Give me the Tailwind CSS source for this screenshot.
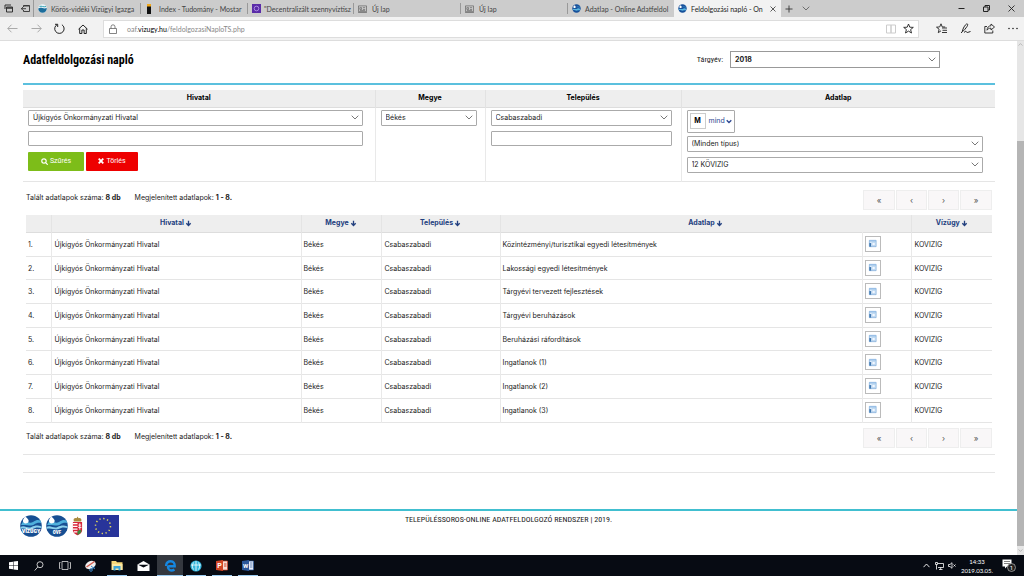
<!DOCTYPE html>
<html lang="hu">
<head>
<meta charset="utf-8">
<title>Feldolgozási napló - Online Adatfeldolgozó</title>
<script src="https://cdn.jsdelivr.net/npm/@tailwindcss/browser@4"></script>
</head>
<body class="flex min-h-screen flex-col bg-white font-['Inter','Roboto',sans-serif] text-[7px] leading-[10px] text-[#222]">
<svg class="hidden">
  <symbol id="chev" viewBox="0 0 8 5"><path d="M.7.7 4 4 7.3.7" fill="none" stroke="currentColor" stroke-width=".8"/></symbol>
  <symbol id="drop" viewBox="0 0 12 12"><circle cx="6" cy="6" r="5.6" fill="#17509a"/><path d="M1 7c2-2 3 .5 5-.5s3-1 5 0c-.4 1.300-1 1.800-1.500 2.200-2-.8-3 .6-4.500 0S2 8 1.200 8z" fill="#5ab6e0"/><path d="M3.500 1.500C5 3 5.500 4.500 4.200 5.200 2.800 5.800 1.800 4.800 1.600 3.700z" fill="#fff"/><path d="M6 4c2-1 3 .5 5 .3" stroke="#4aa3d8" stroke-width=".8" fill="none"/></symbol>
  <symbol id="news" viewBox="0 0 10 9"><path d="M.5 1h9v6.500h-9zM0 8.500h10M2 3h2v2H2zM5.500 3H8M5.500 5H8M2 6.300h6" fill="none" stroke="#555" stroke-width=".7"/></symbol>
  <symbol id="arrow" viewBox="0 0 8 8"><path d="M4 .8v5.500M1.500 3.800 4 6.300 6.500 3.800" fill="none" stroke="currentColor" stroke-width="1.500"/></symbol>
  <symbol id="sheet" viewBox="0 0 10 10"><path d="M1.500 1.500h7.500v7H1.500z" fill="#dcebf9" stroke="#7aa9d8" stroke-width=".8"/><path d="M1.500 2.200H9" stroke="#93bde8" stroke-width="1.300"/><path d="M1.500 4.500h2v4h-2z" fill="#3f77b0"/><path d="M4.500 3.800h3.500v3.500H4.500z" fill="#f2f8ff" stroke="#9fc3e8" stroke-width=".6"/></symbol>
  <symbol id="waves" viewBox="0 0 22 22"><circle cx="11" cy="11" r="10.800" fill="#174f93"/><path d="M3 6.500c4-1.500 6 3 10 .5s5-2 7.500-1.500l.8 2.500c-3-.5-5 0-7.500 1.700S7 9.500 1 10z" fill="#4fb0dc"/><path d="M.5 12c4-2.500 7 2 11 0s6-2 10-.5v1.500c-4-1-6-.5-9 1s-8-1.500-12 0z" fill="#8bd0ec"/><path d="M5 1.500c3 2 5 4.500 2.500 6.500C4.500 9.500 2.300 7 3 5z" fill="#fff"/></symbol>
</svg>

<!-- Browser tabs -->
<header>
  <div class="flex h-[17px] items-stretch bg-[#ccc] font-['Lato','Open_Sans',sans-serif] text-[7px] text-[#444]">
    <div class="flex w-[34px] shrink-0 items-center gap-2 border-r border-[#999] pl-1">
      <button aria-label="Félretett lapok"><svg class="h-[9px] w-[9px]" viewBox="0 0 9 9" fill="none" stroke="#333"><path d="M1 5V1h6M2.500 3h6v5h-6z"/><path d="M2.500 4h6" stroke-width="1.500"/></svg></button>
      <button aria-label="Lapok félretétele"><svg class="h-[9px] w-[9px]" viewBox="0 0 9 9" fill="none" stroke="#333" stroke-width=".9"><path d="M2.500 3V1.500h6v6h-6V6M2.500 2h6M0 4.700h5M2 3 .5 4.700 2 6.300"/></svg></button>
    </div>
    <nav class="flex min-w-0 flex-1" aria-label="Lapok">
      <a href="#" class="my-[3px] flex w-[107px] items-center gap-1 border-r border-[#999] pl-1"><svg class="h-[9px] w-[9px] shrink-0" viewBox="0 0 9 9"><circle cx="4.500" cy="4.500" r="4.300" fill="#e8f5fa"/><path d="M.2 4.500c3-2 5 1 8.600-.5C8.800 7 7 8.800 4.500 8.800S.4 7 .2 4.500z" fill="#1c6d9c"/><path d="M1.500 2.500c2-1 4 1 6.500 0" stroke="#39a3b5" fill="none"/></svg><span class="whitespace-nowrap">Körös-vidéki Vízügyi Igazga</span></a>
      <a href="#" class="my-[3px] flex w-[107px] items-center gap-[6px] border-r border-[#999] pl-1"><svg class="h-[10px] w-[8px] shrink-0" viewBox="0 0 8 10"><path d="M2 0h4v10H2z" fill="#111"/><path d="M2 0h4v2.500H2z" fill="#f1a81c"/></svg><span class="whitespace-nowrap">Index - Tudomány - Mostar</span></a>
      <a href="#" class="my-[3px] flex w-[106px] items-center gap-[3px] border-r border-[#999] pl-1"><svg class="h-[9px] w-[9px] shrink-0" viewBox="0 0 9 9"><path d="M0 0h9v9H0z" fill="#5a2ca8"/><circle cx="4.500" cy="4.500" r="2.300" fill="none" stroke="#bda0ee" stroke-width=".8"/></svg><span class="whitespace-nowrap">"Decentralizált szennyvíztisz</span></a>
      <a href="#" class="my-[3px] flex w-[107px] items-center gap-[5px] border-r border-[#999] pl-1"><svg class="h-[8px] w-[9px] shrink-0"><use href="#news"/></svg>Új lap</a>
      <a href="#" class="my-[3px] flex w-[107px] items-center gap-[5px] border-r border-[#999] pl-1"><svg class="h-[8px] w-[9px] shrink-0"><use href="#news"/></svg>Új lap</a>
      <a href="#" class="my-[3px] flex w-[106px] items-center gap-1 pl-1"><svg class="h-[9px] w-[9px] shrink-0"><use href="#drop"/></svg><span class="whitespace-nowrap">Adatlap - Online Adatfeldol</span></a>
      <a href="#" class="flex w-[107px] items-center gap-1 bg-[#f2f2f2] pr-[5px] pl-1 text-[#222]"><svg class="h-[9px] w-[9px] shrink-0"><use href="#drop"/></svg><span class="flex-1 whitespace-nowrap">Feldolgozási napló - On</span><svg class="h-[6px] w-[6px] shrink-0" viewBox="0 0 6 6" stroke="#333" stroke-width=".8"><path d="m.5.500 5 5M5.500.500l-5 5"/></svg></a>
      <div class="flex items-center gap-[9px] pl-1 text-[#555]">
        <button aria-label="Új lap nyitása"><svg class="h-2 w-2" viewBox="0 0 8 8" stroke="#333" stroke-width=".9"><path d="M4 .5v7M.5 4h7"/></svg></button>
        <button aria-label="Lapok előnézete"><svg class="h-[5px] w-2"><use href="#chev"/></svg></button>
      </div>
    </nav>
    <div class="flex items-center gap-[18px] pr-[9px]">
      <button aria-label="Kis méret"><svg class="h-[7px] w-[7px]" viewBox="0 0 7 7" stroke="#222"><path d="M.5 3.500h6"/></svg></button>
      <button aria-label="Előző méret"><svg class="h-[7px] w-[7px]" viewBox="0 0 7 7" fill="none" stroke="#222"><path d="M2 2V.5h4.500V5H5M.5 2h4.500v4.500H.5z"/></svg></button>
      <button aria-label="Bezárás"><svg class="h-[7px] w-[7px]" viewBox="0 0 7 7" stroke="#222" stroke-width=".9"><path d="m.5.500 6 6M6.500.500l-6 6"/></svg></button>
    </div>
  </div>
  <div class="flex h-6 items-center border-b border-[#ddd] bg-[#f2f2f2]">
    <div class="flex w-[103px] items-center justify-between pr-[15px] pl-[7px]">
      <button aria-label="Vissza"><svg class="h-[9px] w-[11px]" viewBox="0 0 11 9" fill="none" stroke="#aaa"><path d="M10.500 4.500H.8M4.500.700.800 4.500l3.700 3.800"/></svg></button>
      <button aria-label="Előre"><svg class="h-[9px] w-[11px]" viewBox="0 0 11 9" fill="none" stroke="#aaa"><path d="M.5 4.500h9.700M6.500.700l3.700 3.800-3.700 3.800"/></svg></button>
      <button aria-label="Frissítés"><svg class="h-[11px] w-[11px]" viewBox="0 0 11 11" fill="none" stroke="#222"><path d="M3.300 1.500a4.700 4.700 0 1 0 4.600.2M1 1.300h2.700V4"/></svg></button>
      <button aria-label="Kezdőlap"><svg class="h-[10px] w-[10px]" viewBox="0 0 10 10" fill="none" stroke="#222"><path d="M.5 5.200 5 1l4.500 4.200M1.700 4.300v5.200h2.200V6h2.200v3.500h2.200V4.300"/></svg></button>
    </div>
    <div class="flex h-[18px] min-w-0 flex-1 items-center border border-[#ddd] bg-white pr-1 pl-[5px]">
      <svg class="h-[10px] w-[8px] shrink-0" viewBox="0 0 8 10" fill="none" stroke="#666" stroke-width=".8"><path d="M.5 4.500h7v5h-7zM2 4.500V2.800a2 2 0 0 1 4 0v1.700"/></svg>
      <a href="#" class="ml-[10px] flex-1 font-['Lato','Open_Sans',sans-serif] text-[7px] text-[#888]">oaf.<span class="text-black">vizugy.hu</span>/feldolgozasiNaploTS.php</a>
      <button aria-label="Olvasó nézet" class="mr-[7px]"><svg class="h-[10px] w-[10px]" viewBox="0 0 10 10" fill="none" stroke="#ccc"><path d="M.5 1H5v8H.5zM5 1h4.500v8H5z"/></svg></button>
      <button aria-label="Kedvencekhez adás"><svg class="h-[11px] w-[11px]" viewBox="0 0 11 11" fill="none" stroke="#222" stroke-width=".9"><path d="m5.500 1 1.300 3.200 3.500.2-2.700 2.200.9 3.400-3-1.900-3 1.900.9-3.400L.7 4.400l3.500-.2z"/></svg></button>
    </div>
    <div class="flex items-center gap-[13px] pr-[6px] pl-[17px]">
      <button aria-label="Központ"><svg class="h-[11px] w-[11px]" viewBox="0 0 11 11" fill="none" stroke="#222" stroke-width=".9"><path d="M6 5h5M6.500 7.300H11M6 9.500h5M5 7.800 2.300 9.700l.8-3.500L.5 4.200l3.200-.3L5 .8l1.200 3.100 3 .1"/></svg></button>
      <button aria-label="Jegyzetek"><svg class="h-[11px] w-[11px]" viewBox="0 0 11 11" fill="none" stroke="#222"><path d="M2.300 8.500C3 5 5 2 6.500 1c1.500-.5 1.500 1 .5 2.500S4 7.800 2.300 8.500L1.200 10M4 9.500c1.500-1.500 2.200-1.500 2.500-.5s1.500.3 4-.5"/></svg></button>
      <button aria-label="Megosztás"><svg class="h-[11px] w-[11px]" viewBox="0 0 11 11" fill="none" stroke="#222" stroke-width=".9"><path d="M3 3.500H.8V10h8V7.500M7 1l3.500 3L7 7V5.200c-2 0-3 .5-4 2 .2-2.700 1.500-4.300 4-4.500z"/></svg></button>
      <button aria-label="Továbbiak"><svg class="h-[11px] w-[10px]" viewBox="0 0 10 11" fill="#222"><circle cx="1" cy="5.500" r=".8"/><circle cx="5" cy="5.500" r=".8"/><circle cx="9" cy="5.500" r=".8"/></svg></button>
    </div>
  </div>
</header>

<div class="flex flex-1">
  <div class="flex min-w-0 flex-1 flex-col">
    <main class="flex-1 pr-[22px] pl-[23px]">
      <div class="flex items-start justify-between pt-[10px] pb-[14px]">
        <h1 class="pt-[2px] font-['Roboto_Condensed','Roboto',sans-serif] text-[12px] leading-[14px] font-bold text-black">Adatfeldolgozási napló</h1>
        <div class="mr-[55px] flex items-center gap-[7px]">
          <label for="year" class="font-['Roboto_Condensed','Roboto',sans-serif] text-[8px]">Tárgyév:</label>
          <div class="relative w-[210px]">
            <select id="year" class="block h-[17px] w-full appearance-none border border-[#999] bg-white px-1 leading-[14px] font-bold"><option>2018</option></select>
            <svg class="pointer-events-none absolute top-[6px] right-1 h-[5px] w-2 text-[#555]"><use href="#chev"/></svg>
          </div>
        </div>
      </div>

      <form class="mt-px border-t-2 border-[#5bc0de] pt-[5px]" onsubmit="return false">
        <table class="w-full table-fixed border-collapse border-b border-[#e5e5e5]">
          <colgroup><col class="w-[352px]"><col class="w-[110px]"><col class="w-[196px]"><col></colgroup>
          <thead>
            <tr class="h-[17px] border-b border-[#ddd] bg-[#eee] text-black">
              <th class="border-r border-[#e2e2e2]">Hivatal</th><th class="border-r border-[#e2e2e2]">Megye</th><th class="border-r border-[#e2e2e2]">Település</th><th>Adatlap</th>
            </tr>
          </thead>
          <tbody>
            <tr class="align-top">
              <td class="border-r border-[#e9e9e9] pt-[2px] pr-3 pb-[10px] pl-[5px]">
                <div class="relative">
                  <select aria-label="Hivatal" class="block h-4 w-full appearance-none rounded-[1px] border border-[#aaa] bg-white px-1 leading-[14px]"><option>Újkígyós Önkormányzati Hivatal</option></select>
                  <svg class="pointer-events-none absolute top-[5px] right-1 h-[5px] w-2 text-[#555]"><use href="#chev"/></svg>
                </div>
                <input aria-label="Hivatal keresése" class="mt-[5px] block h-[15px] w-full rounded-[1px] border border-[#aaa] px-1">
                <div class="mt-[6px] flex gap-[2px] font-['Roboto','Inter',sans-serif] text-white">
                  <button class="flex h-[19px] w-[56px] items-center justify-center gap-[2px] rounded-[1px] bg-[#7dbd19]"><svg class="h-[7px] w-[7px]" viewBox="0 0 7 7" fill="none" stroke="#fff" stroke-width="1.200"><circle cx="3" cy="3" r="2.200"/><path d="m4.700 4.700 2 2"/></svg>Szűrés</button>
                  <button type="reset" class="flex h-[19px] w-[52px] items-center justify-center gap-[2px] rounded-[1px] bg-[#ee0000]"><svg class="h-[6px] w-[6px]" viewBox="0 0 6 6" stroke="#fff" stroke-width="1.800"><path d="m.7.700 4.600 4.600M5.300.700.700 5.300"/></svg>Törlés</button>
                </div>
              </td>
              <td class="border-r border-[#e9e9e9] pt-[2px] pr-2 pl-[5px]">
                <div class="relative">
                  <select aria-label="Megye" class="block h-4 w-full appearance-none rounded-[1px] border border-[#aaa] bg-white px-1 leading-[14px]"><option>Békés</option></select>
                  <svg class="pointer-events-none absolute top-[5px] right-1 h-[5px] w-2 text-[#555]"><use href="#chev"/></svg>
                </div>
              </td>
              <td class="border-r border-[#e9e9e9] pt-[2px] pr-[9px] pl-[5px]">
                <div class="relative">
                  <select aria-label="Település" class="block h-4 w-full appearance-none rounded-[1px] border border-[#aaa] bg-white px-1 leading-[14px]"><option>Csabaszabadi</option></select>
                  <svg class="pointer-events-none absolute top-[5px] right-1 h-[5px] w-2 text-[#555]"><use href="#chev"/></svg>
                </div>
                <input aria-label="Település keresése" class="mt-[5px] block h-[15px] w-full rounded-[1px] border border-[#aaa] px-1">
              </td>
              <td class="pt-[2px] pr-3 pl-[5px]">
                <button type="button" class="flex h-[23px] items-center rounded-[1px] border border-[#aaa] px-[2px] text-[#2b4590]"><span class="mr-[3px] flex h-4 w-4 items-center justify-center border border-[#ccc] font-bold text-black">M</span>mind<svg class="ml-[1px] h-[5px] w-[6px]" viewBox="0 0 6 5" fill="none" stroke="currentColor" stroke-width="1.300"><path d="m.7 1.200 2.300 2.300 2.300-2.300"/></svg></button>
                <div class="relative mt-[3px]">
                  <select aria-label="Adatlap típusa" class="block h-4 w-full appearance-none rounded-[1px] border border-[#aaa] bg-white px-1 leading-[14px]"><option>(Minden típus)</option></select>
                  <svg class="pointer-events-none absolute top-[5px] right-1 h-[5px] w-2 text-[#555]"><use href="#chev"/></svg>
                </div>
                <div class="relative mt-[5px]">
                  <select aria-label="Vízügyi igazgatóság" class="block h-4 w-full appearance-none rounded-[1px] border border-[#aaa] bg-white px-1 leading-[14px]"><option>12 KÖVIZIG</option></select>
                  <svg class="pointer-events-none absolute top-[5px] right-1 h-[5px] w-2 text-[#555]"><use href="#chev"/></svg>
                </div>
              </td>
            </tr>
          </tbody>
        </table>
      </form>

      <div class="flex items-start justify-between px-[3px] pt-2 pb-[5px]">
        <p class="flex gap-[14px] pt-[3px]"><span>Talált adatlapok száma: <b>8 db</b></span><span>Megjelenített adatlapok: <b>1 - 8.</b></span></p>
        <nav class="flex gap-px text-[8px] text-[#555]" aria-label="Lapozó">
          <button class="h-5 w-8 border border-[#eee] bg-[#f9f7f8]">«</button><button class="h-5 w-[31px] border border-[#eee] bg-[#f9f7f8]">‹</button><button class="h-5 w-[31px] border border-[#eee] bg-[#f9f7f8]">›</button><button class="h-5 w-8 border border-[#eee] bg-[#f9f7f8]">»</button>
        </nav>
      </div>

      <div class="px-[3px]">
        <table class="h-52 w-full table-fixed border-collapse">
          <colgroup><col class="w-[25px]"><col class="w-[250px]"><col class="w-[80px]"><col class="w-[119px]"><col><col class="w-[49px]"><col class="w-[81px]"></colgroup>
          <thead>
            <tr class="h-[18px] border-b border-[#ddd] bg-[#eee] text-[#23407f]">
              <th class="border-r border-[#e4e4e4]"></th>
              <th class="border-r border-[#e4e4e4]"><a href="#" class="inline-flex items-center gap-px">Hivatal <svg class="h-[7px] w-[7px]"><use href="#arrow"/></svg></a></th>
              <th class="border-r border-[#e4e4e4]"><a href="#" class="inline-flex items-center gap-px">Megye <svg class="h-[7px] w-[7px]"><use href="#arrow"/></svg></a></th>
              <th class="border-r border-[#e4e4e4]"><a href="#" class="inline-flex items-center gap-px">Település <svg class="h-[7px] w-[7px]"><use href="#arrow"/></svg></a></th>
              <th colspan="2" class="border-r border-[#e4e4e4]"><a href="#" class="inline-flex items-center gap-px">Adatlap <svg class="h-[7px] w-[7px]"><use href="#arrow"/></svg></a></th>
              <th><a href="#" class="inline-flex items-center gap-px">Vízügy <svg class="h-[7px] w-[7px]"><use href="#arrow"/></svg></a></th>
            </tr>
          </thead>
          <tbody id="rows"></tbody>
        </table>
      </div>
      <template id="row">
        <tr class="border-b border-[#e5e5e5]">
          <td class="border-r border-[#e9e9e9] pt-px pl-[2px]"></td>
          <td class="border-r border-[#e9e9e9] pt-px pl-[3px]">Újkígyós Önkormányzati Hivatal</td>
          <td class="border-r border-[#e9e9e9] pt-px pl-[2px]">Békés</td>
          <td class="border-r border-[#e9e9e9] pt-px pl-[3px]">Csabaszabadi</td>
          <td class="border-r border-[#e9e9e9] pt-px pl-[2px]"></td>
          <td class="border-r border-[#e9e9e9] pt-px pl-[2px]"><button aria-label="Adatlap megnyitása" class="mb-[2px] flex h-4 w-4 items-center justify-center border border-[#bbb] bg-white"><svg class="h-[9px] w-[9px]"><use href="#sheet"/></svg></button></td>
          <td class="pt-px pl-[3px]">KOVIZIG</td>
        </tr>
      </template>
      <script>
        ['Közintézményi/turisztikai egyedi létesítmények', 'Lakossági egyedi létesítmények', 'Tárgyévi tervezett fejlesztések', 'Tárgyévi beruházások', 'Beruházási ráfordítások', 'Ingatlanok (1)', 'Ingatlanok (2)', 'Ingatlanok (3)'].forEach((name, i) => {
          const row = document.getElementById('row').content.cloneNode(true);
          const cells = row.querySelectorAll('td');
          cells[0].textContent = (i + 1) + '.';
          cells[4].textContent = name;
          document.getElementById('rows').append(row);
        });
      </script>

      <div class="flex items-start justify-between border-b border-[#e5e5e5] px-[3px] pt-[5px] pb-[6px]">
        <p class="flex gap-[14px] pt-1"><span>Talált adatlapok száma: <b>8 db</b></span><span>Megjelenített adatlapok: <b>1 - 8.</b></span></p>
        <nav class="flex gap-px text-[8px] text-[#555]" aria-label="Lapozó alul">
          <button class="h-5 w-8 border border-[#eee] bg-[#f9f7f8]">«</button><button class="h-5 w-[31px] border border-[#eee] bg-[#f9f7f8]">‹</button><button class="h-5 w-[31px] border border-[#eee] bg-[#f9f7f8]">›</button><button class="h-5 w-8 border border-[#eee] bg-[#f9f7f8]">»</button>
        </nav>
      </div>
      <hr class="mt-[17px] border-[#e5e5e5]">
    </main>

    <footer class="grid h-[46px] grid-cols-[1fr_auto_1fr] items-start border-t-2 border-[#41bfd0] px-5">
      <div class="flex items-center gap-1 pt-1">
        <svg class="h-[22px] w-[22px]" viewBox="0 0 22 22" role="img" aria-label="Vízügy"><use href="#waves"/><text x="11" y="18" text-anchor="middle" font-family="Roboto Condensed" font-size="6" font-weight="900" fill="#fff">VÍZÜGY</text></svg>
        <svg class="h-[22px] w-[22px]" viewBox="0 0 22 22" role="img" aria-label="OVF"><use href="#waves"/><text x="11" y="18.500" text-anchor="middle" font-family="Roboto Condensed" font-size="5" font-weight="900" fill="#fff">OVF</text></svg>
        <svg class="h-[22px] w-[11px]" viewBox="0 0 12 22" role="img" aria-label="Magyarország címere"><path d="M2 6C1 3 3 2 5 2.500L6 .5l1.200 2C9.500 2 11 3.500 10 6z" fill="#a88a3e"/><path d="M1 6.500h10v9c0 3-3 4.500-5 5.500-2-1-5-2.500-5-5.500z" fill="#d7263a"/><path d="M1 8.500h5M1 11.500h5M1 14.500h5M2 17.500h4" stroke="#fff" stroke-width="1.300"/><path d="M8.500 8v7M7 10h3M6.700 12.500h3.600" stroke="#fff"/><path d="M6 17c2-2 3-2 4.500-1-.5 3-3 4-4.500 5z" fill="#3c8a3e"/></svg>
        <svg class="h-[22px] w-8" viewBox="0 0 32 22" role="img" aria-label="Európai Unió"><path d="M0 0h32v22H0z" fill="#28349a"/><circle cx="16" cy="11" r="7.500" fill="none" stroke="#e9dd5c" stroke-width="1.500" stroke-dasharray="1.300 2.627"/></svg>
      </div>
      <p class="pt-1 font-['Roboto_Condensed','Roboto',sans-serif] text-[8px]">TELEPÜLÉSSOROS-ONLINE ADATFELDOLGOZÓ RENDSZER | 2019.</p>
    </footer>
  </div>
  <div class="flex w-[7px] shrink-0 flex-col items-center bg-[#e6e6e6] text-[#888]">
    <svg class="my-[2px] h-[3px] w-[5px] rotate-180"><use href="#chev"/></svg>
    <div class="flex-[93]"></div>
    <div class="w-full flex-[405] bg-[#b5b5b5]"></div>
    <svg class="my-[3px] h-[3px] w-[5px]"><use href="#chev"/></svg>
  </div>
</div>

<!-- Taskbar -->
<div class="flex h-[21px] items-stretch justify-between bg-[#070b13] font-['Lato','Open_Sans',sans-serif] text-white">
  <div class="flex">
    <button aria-label="Start" class="flex w-[26px] items-center justify-center"><svg class="h-[9px] w-[9px]" viewBox="0 0 9 9" fill="#fff"><path d="m0 1.300 4-.6v3.500H0zM4.500.600 9 0v4.200H4.500zM0 4.700h4v3.500l-4-.5zM4.500 4.700H9V9l-4.500-.6z"/></svg></button>
    <button aria-label="Keresés" class="flex w-[26px] items-center justify-center"><svg class="h-[10px] w-[10px]" viewBox="0 0 10 10" fill="none" stroke="#ddd" stroke-width=".9"><circle cx="6" cy="3.700" r="3"/><path d="M3.900 5.900.700 9.500"/></svg></button>
    <button aria-label="Feladatnézet" class="flex w-[25px] items-center justify-center"><svg class="h-[9px] w-[12px]" viewBox="0 0 12 9" fill="none" stroke="#ddd" stroke-width=".8"><path d="M3 .5h6v8H3zM1.500 1.500h-1v6h1M10.500 1.500h1v6h-1"/></svg></button>
    <button aria-label="Képmetsző" class="flex w-[27px] items-center justify-center"><svg class="h-[12px] w-[13px]" viewBox="0 0 13 12"><ellipse cx="6.500" cy="5" rx="5.500" ry="3.800" transform="rotate(-25 6.500 5)" fill="#eee"/><path d="M2.500 7 10.500 1.500" stroke="#d25a4c" stroke-width="1.500"/><path d="m7 6 4 3M11 6.500 7.500 9" stroke="#3a84c2"/><circle cx="7" cy="10" r="1.300" fill="none" stroke="#3a84c2"/></svg></button>
    <button aria-label="Fájlkezelő" class="flex w-[26px] flex-col items-center justify-end px-[3px]"><svg class="mb-1 h-[11px] w-[12px]" viewBox="0 0 12 11"><path d="M.5 1h4.500l1 1.300h5.500V10H.5z" fill="#f6d778"/><path d="M1 4h10.500v6H1z" fill="#fbe8a4"/><path d="M2.500 6h7v4.500h-2V8.500h-3v2h-2z" fill="#3da3d4"/></svg><span class="h-px w-full bg-[#9ccdf2]"></span></button>
    <button aria-label="Posta" class="flex w-[27px] items-center justify-center"><svg class="h-[10px] w-[13px]" viewBox="0 0 13 10" fill="#fff"><path d="M.5 3.500 6.500 0l6 3.500V10H.5z"/><path d="M1 3.700h11L6.500 6.500z" fill="#070b13"/></svg></button>
    <button aria-label="Edge" class="flex w-[26px] flex-col items-center justify-end bg-[#34383f]"><svg class="mb-[3px] h-[12px] w-[11px]" viewBox="0 0 11 12" fill="none" stroke="#1687e0" stroke-width="2.400"><path d="M1 6c.3-3 2-4.700 4.700-4.700C8.500 1.300 9.800 3.200 9.700 6.300H3.500M3.300 5.500C2 10 6 11.500 9.500 9.600"/></svg><span class="h-px w-full bg-[#9ccdf2]"></span></button>
    <button aria-label="Böngésző" class="flex w-[26px] flex-col items-center justify-end px-[3px]"><svg class="mb-[3px] h-[12px] w-[12px]" viewBox="0 0 12 12"><circle cx="6" cy="6" r="5.600" fill="#35b5dc"/><path d="M6 1v10M3.500 2.500C2 5 2 7.500 3.500 9.500M8.500 2.500c1.500 2.500 1.500 5 0 7M1 5h10" fill="none" stroke="#e6f8fd" stroke-width=".9"/></svg><span class="h-px w-full bg-[#9ccdf2]"></span></button>
    <button aria-label="PowerPoint" class="flex w-[26px] flex-col items-center justify-end px-[3px]"><svg class="mb-1 h-[11px] w-[12px]" viewBox="0 0 12 11"><path d="M5 1h6.500v9H5z" fill="#f7ddd5" stroke="#d04525" stroke-width=".7"/><path d="M0 1 7 0v11L0 10z" fill="#d04525"/><text x="3.500" y="8" text-anchor="middle" font-family="Roboto" font-size="7" font-weight="700" fill="#fff">P</text><path d="M8 4h2.500M8 6h2.500" stroke="#d04525"/></svg><span class="h-px w-full bg-[#9ccdf2]"></span></button>
    <button aria-label="Word" class="flex w-[26px] flex-col items-center justify-end px-[3px]"><svg class="mb-1 h-[11px] w-[12px]" viewBox="0 0 12 11"><path d="M5 1h6.500v9H5z" fill="#e7eefa" stroke="#2b579a" stroke-width=".7"/><path d="M0 1 7 0v11L0 10z" fill="#2b579a"/><text x="3.500" y="7.500" text-anchor="middle" font-family="Roboto" font-size="6" font-weight="700" fill="#fff">W</text><path d="M8 3h2.500M8 5h2.500M8 7h2.500" stroke="#2b579a" stroke-width=".7"/></svg><span class="h-px w-full bg-[#9ccdf2]"></span></button>
  </div>
  <div class="flex items-center pr-2">
    <button aria-label="Rejtett ikonok" class="mr-[5px]"><svg class="h-[5px] w-[7px]" viewBox="0 0 7 5" fill="none" stroke="#fff" stroke-width=".9"><path d="M.5 4.200 3.500 1l3 3.200"/></svg></button>
    <svg class="mr-1 h-[8px] w-[9px]" viewBox="0 0 9 8" fill="none" stroke="#fff" stroke-width=".8"><path d="M3 1.500h5.500v4H3M4 7.500h3.500M5.700 5.500v2M.5.500h2v2h-2zM1.500 2.500v5"/></svg>
    <svg class="mr-[5px] h-[7px] w-[8px]" viewBox="0 0 8 7" fill="none" stroke="#fff" stroke-width=".8"><path d="M.5 2.500H2L4 .7v5.600L2 4.500H.5zM5.500 2.500l2 2M7.500 2.500l-2 2"/></svg>
    <div class="mr-[9px] text-center text-[6px] leading-[9px]"><div>14:33</div><div>2019.03.05.</div></div>
    <button aria-label="Értesítések"><svg class="h-[13px] w-[14px]" viewBox="0 0 14 13"><path d="M.5.500h9v7H5L3 9.500v-2H.500z" fill="#fff"/><path d="M2 2.500h6M2 4.500h6" stroke="#333" stroke-width=".6"/><circle cx="9.500" cy="8.500" r="4" fill="#222" stroke="#bbb" stroke-width=".7"/><text x="9.500" y="10.600" text-anchor="middle" font-family="Roboto" font-size="6" fill="#fff">1</text></svg></button>
  </div>
</div>
</body>
</html>
